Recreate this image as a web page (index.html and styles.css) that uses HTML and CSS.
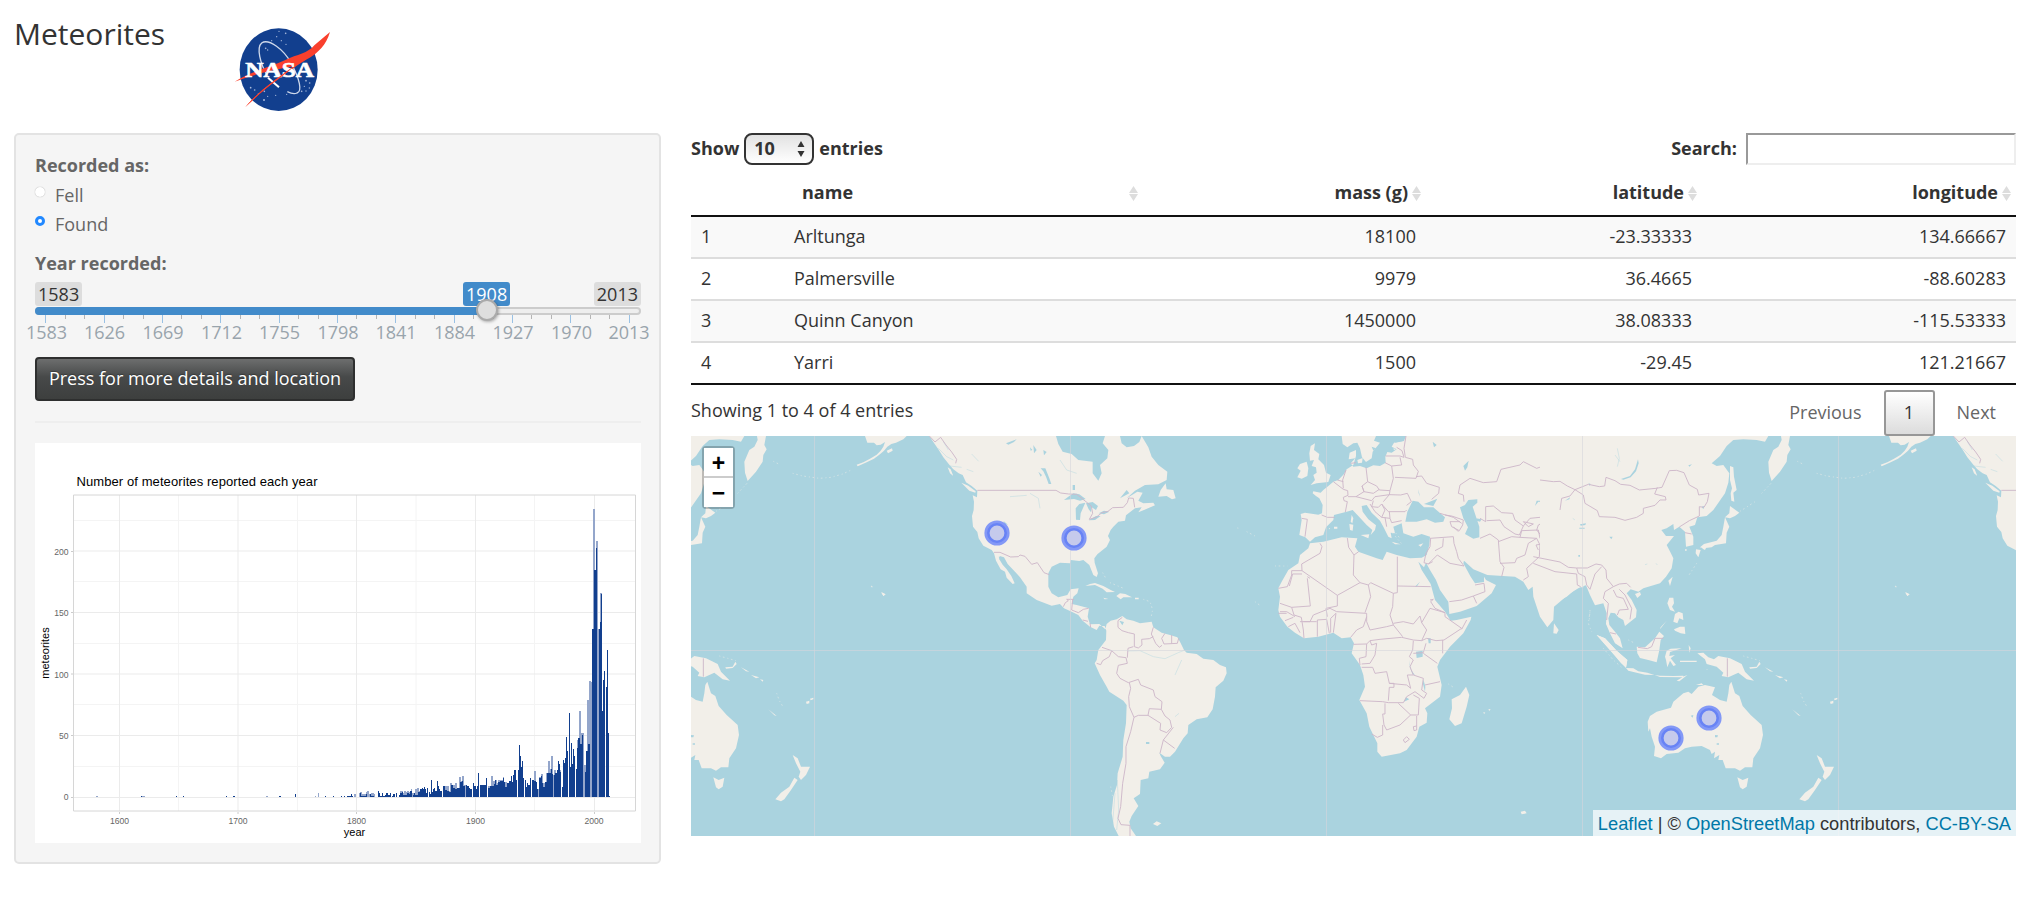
FILE: index.html
```html
<!DOCTYPE html>
<html lang="en">
<head>
<meta charset="utf-8">
<title>Meteorites</title>
<link rel="stylesheet" href="styles.css">
</head>
<body>
<header class="page-header">
  <h1 class="title">Meteorites</h1>
  <svg class="logo" viewBox="0 0 345 300" role="img" aria-label="NASA">
    <ellipse cx="164" cy="149" rx="117" ry="124" fill="#123f8e"/>
    <g fill="#a9badb"><circle cx="165" cy="34" r="2"/><circle cx="185" cy="40" r="2.5"/><circle cx="158" cy="50" r="2"/><circle cx="172" cy="62" r="2"/><circle cx="143" cy="62" r="2"/><circle cx="186" cy="73" r="2"/><circle cx="125" cy="85" r="2.5"/><circle cx="131" cy="90" r="2"/><circle cx="80" cy="203" r="2.5"/><circle cx="92" cy="210" r="2.5"/><circle cx="103" cy="222" r="2"/><circle cx="121" cy="214" r="2.5"/><circle cx="120" cy="240" r="3"/><circle cx="131" cy="229" r="2"/><circle cx="155" cy="226" r="2"/><circle cx="188" cy="223" r="2"/><circle cx="246" cy="182" r="2.5"/><circle cx="257" cy="189" r="2.5"/><circle cx="241" cy="199" r="2"/><circle cx="256" cy="204" r="2"/><circle cx="233" cy="214" r="2.5"/><circle cx="246" cy="213" r="2"/></g>
    <path d="M130 167C108 130 97 82 113 69C133 55 179 86 203 132C226 176 236 214 219 219C210 223 200 220 190 215" fill="none" stroke="#cdd7ea" stroke-width="4"/>
    <path d="M32 185C90 150 143 140 184 120C220 103 252 100 271 76L318 36C306 76 282 98 257 113C230 128 218 137 202 149C165 171 110 217 64 261C101 217 154 178 209 139C164 147 93 161 32 185Z" fill="#f9402d"/>
    <text x="64" y="172" textLength="206" lengthAdjust="spacingAndGlyphs" class="logo-word">NASA</text>
    <path d="M132 173L165 202" stroke="#fff" stroke-width="6"/>
    <path d="M64 261C101 217 154 178 209 139C187 165 120 203 64 261Z" fill="#f9402d"/>
  </svg>
</header>
<main class="layout">
  <aside class="well">
    <div class="group-label">Recorded as:</div>
    <label class="radio"><span class="dot"></span>Fell</label>
    <label class="radio"><span class="dot dot-on"></span>Found</label>
    <div class="group-label year-label">Year recorded:</div>
    <div class="slider">
      <div class="bubbles"><span class="bubble">1583</span><span class="bubble">2013</span><span class="bubble bubble-current">1908</span></div>
      <div class="track"><div class="fill"></div><div class="handle"></div></div>
      <svg class="scale" viewBox="0 0 646 40">
        <path class="tick-major" d="M31.500 0V8M90.500 0V8M148.500 0V8M206.500 0V8M265.500 0V8M323.500 0V8M381.500 0V8M440.500 0V8M498.500 0V8M556.500 0V8M615.500 0V8"/>
        <path class="tick-minor" d="M51.500 0V4M70.500 0V4M109.500 0V4M129.500 0V4M167.500 0V4M187.500 0V4M226.500 0V4M245.500 0V4M284.500 0V4M304.500 0V4M342.500 0V4M362.500 0V4M401.500 0V4M420.500 0V4M459.500 0V4M479.500 0V4M517.500 0V4M537.500 0V4M576.500 0V4M595.500 0V4"/>
        <g class="tick-text"><text x="32.500" y="24">1583</text><text x="90.500" y="24">1626</text><text x="149" y="24">1669</text><text x="207.500" y="24">1712</text><text x="265.500" y="24">1755</text><text x="324" y="24">1798</text><text x="382" y="24">1841</text><text x="440.500" y="24">1884</text><text x="499" y="24">1927</text><text x="557.500" y="24">1970</text><text x="615" y="24">2013</text></g>
      </svg>
    </div>
    <button class="details">Press for more details and location</button>
    <hr class="rule">
    <svg class="chart" viewBox="35 443 606 400">
      <rect x="35" y="443" width="606" height="400" fill="#fff"/>
      <path class="grid-minor" d="M73.500 520.500H635.500M73.500 581.500H635.500M73.500 643.500H635.500M73.500 704.500H635.500M73.500 766.500H635.500M178.500 495V811M297.500 495V811M416 495V811M534.500 495V811"/>
      <path class="grid-major" d="M73.500 551H635.500M73.500 612.500H635.500M73.500 674H635.500M73.500 735.500H635.500M73.500 797.500H635.500M119.500 495V811M238 495V811M356.500 495V811M475.500 495V811M594.500 495V811"/>
      <g transform="translate(340 690) scale(.33333)">
        <path class="bar-light" d="M-732 320V317H-725V320ZM-597 320V317H-586V320ZM-221 320V317H-216V320ZM-75 320V317H-71V320ZM-66 320V310H-62V320ZM42 321V313H48V321ZM58 321V310H61V306H65V312H77V306H82V303H87V311H92V309H101V312H104V321ZM180 321V304H189V308H192V303H197V306H202V303H207V307H212V298H217V309H226V297H231V295H237V303H241V298H246V321ZM309 321V288H327V303H331V280H336V285H345V280H350V293H357V261H362V273H366V258H372V284H378V321ZM444 321V288H453V258H458V274H465V269H470V280H475V270H489V262H493V277H500V283H510V321ZM582 321V243H588V277H592V298H598V262H602V252H608V280H619V248H624V213H630V238H633V198H639V256H642V240H649V250H654V240H663V321ZM711 321V150H717V63H723V130H732V225H738V182H742V30H748V-27H754V-25H757V321ZM759 321V-544H765V-356H769V-448H774V-183H780V-292H786V321Z"/>
        <path class="bar-dark" d="M-597 321V317H-594V321ZM-493 321V317H-490V321ZM-470 321V317H-467V321ZM-343 321V317H-340V321ZM-320 321V317H-316V321ZM-184 321V317H-178V321ZM-135 321V312H-131V321ZM-46 321V317H-41V321ZM-22 321V317H-17V321ZM3 321V317H6V321ZM12 321V317H15V321ZM22 321V318H32V313H36V318H39V321ZM60 321V310H64V318H77V312H80V321ZM90 321V313H94V317H103V321ZM114 321V303H117V310H121V317H126V310H129V318H135V314H139V310H143V315H149V310H153V321ZM157 321V317H160V312H164V321ZM168 321V310H172V321ZM177 321V316H180V309H187V305H190V314H201V308H207V311H210V302H215V308H217V321ZM218 321V316H222V308H226V316H233V305H239V297H244V296H247V294H249V298H251V292H255V298H258V308H261V295H264V321ZM267 321V306H270V312H273V270H276V306H279V297H282V293H286V303H291V272H294V288H297V298H300V303H305V321ZM309 321V288H315V300H321V303H327V306H332V284H339V293H345V298H351V293H360V277H366V272H369V288H375V321ZM378 321V284H381V288H387V293H391V297H395V321ZM399 321V280H402V288H408V297H410V288H414V250H417V321ZM420 321V286H438V265H441V321ZM445 321V293H450V287H462V282H465V270H468V284H475V276H480V272H489V264H492V277H495V292H501V280H508V272H513V258H516V276H519V256H522V240H528V269H531V321ZM534 321V240H537V166H540V199H543V232H546V214H549V264H552V321ZM555 321V270H558V292H561V278H564V284H570V264H573V321ZM576 321V270H582V274H588V276H591V298H594V321ZM597 321V264H602V258H607V280H610V290H616V276H622V250H627V248H633V237H636V252H639V321ZM642 321V256H646V250H651V240H654V214H657V221H660V246H663V321ZM666 321V292H669V210H672V220H675V203H678V141H681V184H684V321ZM687 321V70H690V232H693V160H696V221H699V178H702V197H705V321ZM708 321V237H711V174H714V144H720V163H726V134H729V321ZM735 321V246H738V182H744V163H750V321ZM756 321V-183H762V-360H768V-427H771V321ZM777 321V-183H779V-205H783V-289H786V63H789V-30H792V-57H795V321ZM798 321V-10H801V-120H804V129H807V318H810V321Z"/>
      </g>
      <path class="frame" d="M73.500 495H635.500V811H73.500Z"/>
      <path class="ticks" d="M71 551.500H73M71 612.500H73M71 674H73M71 735.500H73M71 797.500H73M119.500 812V814M238 812V814M356.500 812V814M475.500 812V814M594.500 812V814"/>
      <text x="76.500" y="486.400" textLength="241" class="chart-title">Number of meteorites reported each year</text>
      <g class="axis axis-y"><text x="68.500" y="554.500">200</text><text x="68.500" y="615.500">150</text><text x="68.500" y="677.500">100</text><text x="68.500" y="738.700">50</text><text x="68.500" y="800.300">0</text></g>
      <g class="axis axis-x"><text x="119.500" y="823.500">1600</text><text x="238" y="823.500">1700</text><text x="356.500" y="823.500">1800</text><text x="475.500" y="823.500">1900</text><text x="594" y="823.500">2000</text></g>
      <text x="354.500" y="835.500" class="axis-title">year</text>
      <text transform="translate(48.500 653) rotate(-90)" class="axis-title">meteorites</text>
    </svg>
  </aside>
  <section class="results">
    <div class="controls">
      <label class="length">Show <span class="select">10<svg viewBox="0 0 8 16"><path d="M4 0L7.500 6H.5ZM4 16L7.500 10H.5Z"/></svg></span> entries</label>
      <label class="search">Search:<input type="text" class="search-box"></label>
    </div>
    <table class="data">
      <colgroup><col class="c1"><col class="c2"><col class="c3"><col class="c4"><col class="c5"></colgroup>
      <thead><tr><th></th>
        <th class="name"><span>name</span><i class="sort"></i></th>
        <th class="num">mass (g)<i class="sort"></i></th>
        <th class="num">latitude<i class="sort"></i></th>
        <th class="num">longitude<i class="sort"></i></th></tr></thead>
      <tbody>
        <tr><td>1</td><td>Arltunga</td><td class="num">18100</td><td class="num">-23.33333</td><td class="num">134.66667</td></tr>
        <tr><td>2</td><td>Palmersville</td><td class="num">9979</td><td class="num">36.4665</td><td class="num">-88.60283</td></tr>
        <tr><td>3</td><td>Quinn Canyon</td><td class="num">1450000</td><td class="num">38.08333</td><td class="num">-115.53333</td></tr>
        <tr><td>4</td><td>Yarri</td><td class="num">1500</td><td class="num">-29.45</td><td class="num">121.21667</td></tr>
      </tbody>
    </table>
    <div class="footer">
      <div class="info">Showing 1 to 4 of 4 entries</div>
      <div class="pages"><a class="page">Previous</a><a class="page page-on">1</a><a class="page">Next</a></div>
    </div>
    <div class="map">
      <svg class="world" viewBox="0 0 1325 400">
        <defs>
          <g id="americas">
            <path class="land" d="M525 18L532 38L552 38L560 46L572 44L585 36L580 50L572 62L560 74L540 86L520 97L500 104L503 109L530 97L552 86L568 74L582 62L592 50L604 42L618 38L640 28L650 18ZM590 62L606 55L608 62L594 70ZM718 18L730 36L745 58L760 82L778 104L790 118L806 130L818 135L828 157L845 168L862 182L861 202L848 196L852 215L851 240L846 258L849 290L862 306L866 325L880 347L905 360L912 370L918 392L932 418L945 425L950 443L968 462L974 460L964 438L950 418L938 404L928 388L929 378L942 382L953 402L975 425L990 442L1010 470L1010 490L1040 510L1085 527L1110 522L1122 535L1145 545L1165 555L1178 572L1200 590L1220 600L1228 587L1244 588L1249 602L1248 630L1225 660L1220 690L1214 700L1230 735L1250 770L1258 785L1300 812L1310 825L1308 880L1300 930L1298 980L1283 1030L1281 1065L1270 1100L1265 1150L1272 1190L1286 1218H1338L1322 1195L1318 1175L1325 1158L1345 1128L1331 1105L1350 1092L1352 1050L1375 1045L1378 1025L1410 1018L1424 998L1412 978L1408 968L1425 980L1440 980L1455 965L1480 925L1493 910L1495 885L1520 868L1552 862L1568 838L1575 800L1577 772L1600 752L1610 730L1608 712L1590 705L1570 690L1540 686L1520 672L1490 668L1482 660L1470 635L1462 622L1440 615L1415 608L1390 592L1385 575L1350 580L1330 572L1310 568L1297 558L1280 568L1262 572L1250 582L1246 598L1228 582L1200 583L1193 560L1197 535L1160 525L1145 522L1150 500L1162 490L1166 475L1142 478L1132 495L1105 502L1085 490L1075 470V430L1085 410L1110 398L1140 400L1142 390L1168 393L1180 390L1198 405L1210 435L1220 441L1224 430L1214 398L1213 385L1222 373L1250 350L1260 330L1254 318L1262 300L1270 290L1285 275L1305 272L1308 256L1335 235L1355 232L1345 247L1362 240L1395 226L1390 218L1360 220L1345 212L1358 188L1342 185L1310 205L1335 182L1365 165L1405 163L1430 150L1432 125L1405 105L1385 80L1375 52L1355 18L1348 36L1332 48L1310 52L1295 40L1290 18H1245L1238 40L1255 60L1252 85L1230 105L1235 130L1225 152L1208 130V95L1165 90L1145 72L1118 65L1105 42L1098 18ZM773 112L782 118L790 138L780 130ZM814 158L835 167L857 184L856 188L838 182ZM1186 468L1200 462L1215 459L1240 468L1262 480L1275 486L1250 487L1238 476L1215 465ZM1279 498L1290 490L1306 492L1326 502L1300 502L1292 508ZM1335 503H1346V508H1335ZM1240 503L1255 507L1244 508ZM1427 160L1430 178L1450 180L1457 205L1446 208L1430 198L1405 200L1412 180ZM1389 1182L1400 1174L1414 1180L1402 1188ZM575 487L587 493L580 498ZM542 468L550 471L545 472Z"/>
            <path class="dots" d="M1238 428L1248 446M1260 458L1298 474M1360 508L1380 515L1388 540L1384 558M1262 1070L1268 1100"/>
            <path class="lake" d="M1122 210L1138 198L1150 190L1168 193L1187 207L1170 212L1152 207ZM1158 269L1157 235L1168 222L1186 218L1180 232L1172 250L1170 270ZM1188 220L1208 216L1224 228L1218 240L1205 232L1203 247L1196 238ZM1196 271L1218 258L1232 258L1215 270ZM1226 250L1242 242L1258 245L1242 253ZM1052 115L1060 124L1068 140L1076 162L1084 162L1078 145L1066 115ZM1045 125L1052 140L1056 135ZM948 40L980 28L972 36L955 44ZM1030 45L1040 60L1032 70ZM1060 60L1070 66L1062 76ZM940 272L954 284L945 283ZM926 380L935 384L930 390ZM1288 572L1302 576L1297 586ZM1368 936H1378V942H1368ZM1148 165H1155V180H1148ZM1020 52L1027 60L1022 62ZM1310 180L1318 190L1290 205Z"/>
            <path class="river" d="M745 55L770 80L790 90M760 35L775 60M780 108L815 112M845 72L866 94M830 118L850 125M1312 663L1350 662L1390 680L1425 686L1465 668L1485 660M1455 735L1475 690M1020 190L1045 205L1050 235M960 200L1010 196M1455 860L1467 850M1282 1050L1286 1140L1280 1200M1275 1090L1268 1180M1110 90L1130 120L1160 130"/>
            <path class="border" d="M718 18L735 36L752 22L768 45L785 66L800 88L797 100M862 181H1098L1112 189L1136 192L1160 193L1188 215L1204 228L1208 250L1198 268L1218 262L1236 248L1254 244L1268 233L1300 232L1312 218L1316 204L1330 205L1334 232M912 367L930 367L962 381L985 380L990 375L1005 379L1025 403L1042 398L1062 428L1078 434M1120 530L1126 518L1135 512L1130 508H1152M1148 508L1145 540M1145 540L1165 548L1180 538L1196 535M1178 570L1194 574M1200 580L1202 592M1297 562L1284 572L1284 592L1296 602L1315 608L1333 612V650L1345 654L1356 645L1355 628L1378 626L1390 620M1390 592L1384 612L1397 640L1408 652L1416 646M1425 610L1415 625L1422 642L1462 640L1466 625M1445 615V640M1236 652L1265 662L1285 680L1308 683L1312 700L1285 706L1280 730L1290 745L1315 758L1345 748L1352 765L1390 780L1395 800L1416 815L1414 838L1378 836L1374 856H1345L1332 862L1318 830L1316 800L1322 775L1318 758M1312 683L1314 655L1330 650M1265 662L1258 680L1238 692L1232 704L1220 700M1374 856L1412 880L1410 900L1430 908L1445 892L1440 870L1425 858L1414 838M1450 892L1420 930L1410 970M1420 930L1454 955M1332 862L1322 905L1308 950L1308 1000L1298 1060L1292 1130L1284 1165L1293 1184L1320 1186V1218"/>
          </g>
          <g id="asia">
            <path class="land" d="M-60 18H625L615 35L590 30L550 28L520 30L500 48L480 78L455 100L470 108L490 105L508 130L505 158L495 190L460 240L440 258L412 262L405 285L388 290L400 320V345L378 350L375 305L358 290L342 300L340 282L320 295L304 300L318 318L342 318L328 335L320 345L332 368L340 385L335 415L318 440L300 460L250 475L235 485L212 478L200 490L215 510L230 540L228 562L195 588L190 570L175 562L165 550L152 548L145 565L148 585L165 605L180 625L188 655L165 640L150 610L138 582L140 550L130 520L105 526L90 495L78 466L50 475L20 500L-60 540ZM690 18L685 45L692 58L682 75L680 95L660 125L635 153L627 128L625 95L640 60L655 50L665 30L663 18ZM510 108L520 112L522 140L530 180L520 188L523 215L514 212L512 190L516 175L510 150ZM510 228L538 248L525 258L510 265L495 262L508 250ZM495 262L508 290L500 308L498 340L465 345L455 352L430 355L420 352L432 342L470 332L485 315L490 290ZM408 358L422 360L415 382L407 370ZM425 355L440 350L435 360ZM375 358H380V362H375ZM325 452L338 440L330 468ZM225 492L240 486L243 494L232 504ZM328 503L340 503L342 520L336 530L345 545L330 540L322 520ZM345 552L356 545L368 550L370 570L358 565L352 580L340 575ZM342 598L360 590L374 590L376 612L362 610L345 602ZM300 598L320 572L302 592ZM110 615L135 625L170 662L202 690L198 713L182 698L155 665ZM198 714L220 715L235 724L262 728L283 735L255 734L205 722ZM284 735L300 737L340 738L370 737V742L300 741ZM350 752L372 739L382 735L358 754ZM230 650L255 652L285 625L298 605L312 618L302 630L298 660L290 697L265 690L240 684L232 670ZM320 662L332 656L365 655L330 666L328 678L345 675L332 685L348 705L340 708L330 692L322 712L318 690L315 680ZM386 645L392 655L388 668ZM360 692H410V696H360ZM412 670L430 668L445 682L462 688L475 678L510 685L545 702L555 725L582 752L560 748L535 728L505 742L485 738L490 728L470 710L440 702L435 688ZM568 712L590 710L598 695L602 702L590 714L570 716ZM265 905L263 875L270 858L290 845L333 833L340 815L370 790L385 785L395 792L415 770L435 765L465 772L456 795L480 810L500 815L505 790L508 765L514 755L525 790L538 798L548 828L572 855L605 885L609 915L600 955L580 985L577 1012L555 1012L540 1022L525 1015L497 1015L488 990L475 990L478 975L462 985L465 965L455 972L450 960L425 948L395 950L375 955L355 968L320 972L303 985L282 978L285 950L275 920L270 895ZM408 765L425 760L430 765ZM532 1042L548 1050L565 1043L560 1070L548 1078L540 1072ZM770 975L785 985L795 1010L822 1010L810 1035L795 1050L788 1040L793 1025L780 1000ZM775 1043L785 1050L765 1080L745 1108L735 1114L718 1108L735 1088L760 1070ZM697 838L722 858L715 856ZM810 815L820 812L820 820L812 822ZM822 806L832 803V808L824 811ZM615 712L640 725L630 724ZM645 735L670 742L660 745ZM672 748L682 750L680 755ZM1035 487L1048 493L1042 498Z"/>
            <path class="dots" d="M540 244L565 228L590 212M605 190L635 158M712 94L732 104M770 130L800 138L850 145L885 142L920 132L950 118M722 790L730 812L742 832M410 400L385 438M90 545L85 580L95 605M130 655L160 690L185 712M205 630L225 640M1005 468L1015 472M550 678L600 692M440 720L446 712"/>
            <path class="lake" d="M183 147L210 138L225 118L234 88L236 100L228 124L212 142L190 149ZM148 320H158L154 328ZM60 283L78 280L76 285L62 287ZM58 293H74V296H58ZM55 375H60V380H55ZM465 915L474 916L472 922H465ZM392 857L400 855L398 863ZM470 940H477V944H470ZM425 230L433 228L430 238ZM15 212L30 202L28 208ZM385 106L396 103L388 110ZM86 160L92 162L88 168Z"/>
            <path class="river" d="M165 75L180 95M172 55L178 85L172 110M500 60L470 95M38 265L45 270M255 404L262 402M288 400L292 405"/>
            <path class="border" d="M-60 150L-20 155L0 154L22 168L45 179L85 163L118 170L134 168L138 142L165 152L182 163L210 166L238 180L288 175L306 172L328 122L350 121L372 128L388 165L412 178L416 195L447 190L442 215L432 232L418 230V258L388 272L358 291M45 179L70 195L75 220L112 242L118 260L165 262L195 271L230 262L250 250V235L285 226L300 210L318 210L316 200L284 192L292 172M45 179L30 198L5 205L0 240M-80 400L-15 425L50 432M-80 380L0 396L25 412L50 414L82 414L108 402L125 405L138 420L140 445L160 470M50 432L52 465L62 470M50 414L55 430L75 440L80 465L90 478L105 432L125 410M160 470L135 485L130 505L145 520L140 570M160 470L178 462L200 460L212 472M160 480L170 500L190 505L205 538L178 540L172 555M178 478L195 495L215 535L210 568M375 308L395 312M150 608L168 612M234 652L262 656L275 650L285 625H310M502 685V740"/>
          </g>
        </defs>
        <rect width="1325" height="400" fill="#aad3df"/>
        <g transform="translate(509 -6) scale(.33333)">
          <path class="land" d="M1150 18H618L612 32L582 38L575 50L590 58L575 68L562 66L556 80L557 98L540 108L520 106L500 115L480 108L460 110L452 100L466 85L446 88L449 68L468 60L468 78L460 105L440 118L432 132L415 150L400 155L385 168L370 180L362 188L340 184L338 190L348 198L358 205L368 225L366 250L355 254L315 248L302 252L305 270L298 315L316 322L330 335L345 322L370 315L378 292L400 270L402 255L440 245L458 240L475 258L500 285L517 300L512 315L525 300L528 286L505 268L488 245L485 228L500 225L515 248L540 272L550 290L565 320L575 325L572 308L585 310L580 290L605 280L610 310L640 320L665 312L690 320L688 345L680 375L665 383L630 385L590 375L560 365L548 390L530 385L475 365L465 350L472 325L425 322L370 335L330 340L325 355L300 375L295 400L265 420L245 455L235 475L240 500L235 540L240 560L262 590L285 608L312 625L355 620L400 608L425 625L452 622L462 640L455 670L480 705L490 735L495 770L478 810L500 850L508 890L532 940L532 965L545 980L600 970L620 960L650 920L658 890L680 878L682 850L675 835L720 800L725 765L712 710L720 690L750 650L790 610L812 570L814 560L770 570L752 572L735 545L705 510L692 462L665 420L655 395L672 412L678 398L690 420L708 450L720 480L745 515L748 552L780 545L830 528L875 490L888 465L858 450L852 440L852 456L825 460L812 440L790 400L792 392L820 418L862 435L945 440L970 455L985 480L998 470L1000 500L1020 560L1042 592L1060 570L1062 530L1110 490L1140 472H1150ZM425 18L428 42L442 52L460 40L472 38L480 55L486 82L498 96L515 85L518 65L540 38L522 32L528 18ZM472 90L488 84L486 98L474 100ZM345 40L332 48L328 70L330 92L342 90L335 108L348 112L350 128L340 135L345 150L332 165L350 160L385 156L392 135L378 128L372 105L355 88L358 72L342 60ZM320 95L300 102L292 115L302 122L292 142L305 146L322 138L325 115ZM455 255L460 265L457 280L452 275ZM448 282L460 284L458 302L450 300ZM482 315L508 313L505 325ZM575 335L602 343L585 343ZM655 345L670 340L662 350ZM580 55L588 58L582 60ZM1062 580L1076 600L1070 611L1060 610ZM798 770L808 795L800 830L785 880L765 888L748 868L756 835L755 808L780 795ZM1190 615L1215 625L1250 662L1282 690L1278 713L1240 672ZM962 1145L975 1142L980 1150L965 1153ZM865 838L872 837L868 843ZM850 846L856 848L852 852ZM402 290H412V296H402ZM386 296L390 294V298Z"/>
          <path class="lake" d="M616 275L622 245L638 212L655 215L672 232L700 232L735 262L730 275L705 278L680 268L650 275ZM672 222L712 206L700 228ZM780 232L795 225L805 210L832 208V218L818 230L828 260L838 290L838 322L820 326L795 312L804 292L790 265ZM828 265L845 268L840 275L830 272ZM648 665L668 662V680L650 684ZM628 690L632 718L645 736L638 732L630 715ZM670 748L676 770L675 785L669 762ZM1005 228L1010 212H1055L1048 217L1015 215ZM790 108L806 92L802 112L795 122ZM698 35L710 45L702 52ZM655 178L660 200L670 210L660 200L656 190ZM618 802L628 808L612 815ZM692 625V640H686L684 625ZM1245 90L1258 80L1255 120L1246 110ZM515 50L528 55L520 62ZM1030 262H1045V266H1030ZM1165 158L1175 160L1168 172ZM660 455L650 470H645ZM585 38L612 33L612 30L590 28Z"/>
          <path class="dots" d="M112 294L122 296M140 305L165 318M225 408L262 408M165 515L185 530M1170 540L1168 570M572 290L600 325M578 310L604 340M745 762L765 775"/>
          <path class="border" d="M305 265L322 268L315 320M365 255L382 262L404 262M400 155L430 178L443 182L444 196L430 202L432 212L442 215L436 246M430 175L428 150L438 120M412 150L430 155M452 100L468 98M498 112L503 155L486 168L492 185L468 200L444 200M503 155L530 168L538 180L570 182L580 145L575 108M557 78H600L612 82L606 62L590 52M618 18L612 55L616 82M600 82L605 105L575 108L555 98M616 82L638 88L640 105L655 124L648 145L585 142M648 140L665 138L680 160L718 172L716 190L695 208M570 182L568 194L602 195L622 190L634 215L620 226M486 168L492 185L520 190L538 178M468 200L515 212L525 200L568 194M520 212L515 230L535 232L545 222L565 245H615L620 240M510 222L525 245L545 262L555 240L545 222M568 194L550 215M555 262L560 290M545 262L570 265L575 278L605 272M568 245L570 265M442 324L446 352L462 375L460 435L480 458L412 496L306 422L305 402L360 370L366 350L360 340M306 422H275V435L262 470L235 475M306 432H278L268 468M322 445L331 528L275 532L240 520M322 440L330 445M462 375L476 365M480 458L505 465L512 458L580 490L592 488V380M592 468L692 470M580 490L578 530L570 555L580 585L560 590L510 600L500 575V550L410 545L390 535L340 555L330 575L300 575M505 465L512 500L495 548M412 496V528L378 535L382 560M275 532L282 555L304 562L310 600L312 625M240 545H260L285 560M235 550H260M255 572L280 562M265 590L285 580L300 608M352 620V570L380 568L388 610M392 608V565L408 550L400 608M310 575H350M452 622L470 600L490 590L500 560M460 643L500 642L510 632L540 628L605 622L640 630L665 632L680 625L708 632L732 630L785 595L735 560V548L705 535L692 515L700 508L690 510M580 580L610 575L640 582L660 558L665 578L680 600L665 632M580 585L608 620M665 578L690 535L735 548M785 598L800 570M500 642L498 680L478 685L480 705M510 632L515 645L530 640L525 675L510 700L485 702M485 712H518L525 730L560 725L568 760L620 765L632 775L622 735H640L670 745L665 780L680 790L672 805L645 785L620 800L610 818H565L548 815L480 812M568 760H582V772H568L565 812M728 670V630M670 670L712 700M640 632L638 660L628 680L640 690L630 710L640 735M640 670L670 668L678 640M675 765L720 755M555 820V852H548L552 885L560 900L600 885L632 855L655 855L658 805L640 795M595 820L632 855M650 858V900L642 902L640 890L650 888M548 885V915L532 922L515 912M610 930L620 920L628 928L615 938ZM690 325L760 320L762 340L770 365L775 385L792 408L750 400L712 375L685 402L672 398L678 370L690 350L692 325M705 362L728 350L730 325M685 402L698 395M748 515L785 510L820 498L855 485L852 460L825 465M820 498L830 520M735 255L755 258L790 270L788 285L778 302L755 290L750 275L780 275M720 250L760 262L785 280M760 290L775 305M792 215L790 195L775 190L780 165L810 145L850 158L890 155L903 118L960 105L970 95L1010 115L1030 108L1062 155L1098 158L1125 178L1160 162L1190 168M1125 178L1110 190L1085 215L1060 240L1062 262L1015 285L1010 300L1050 350L1048 375L1080 380M840 265L857 275V230L880 228L905 248L938 250L945 270L970 288L990 265L1060 258M970 288L958 315L945 312L912 290L900 270L860 272M840 325L870 312L895 330L900 395L912 412L905 440M895 335L935 320L960 322L1010 325L985 340L975 375L950 385L945 398L900 400M960 322L965 302L1015 300L1020 325L1040 340M1010 325L1020 345L1018 380L980 415L985 440L970 450M1040 340L1008 345L1015 360M1080 380L1062 395L1070 405L1130 430M970 275L1000 282L985 290Z"/>
        </g>
        <use href="#asia" transform="translate(869 -6) scale(.33333)"/>
        <use href="#asia" transform="translate(-155 -6) scale(.33333)"/>
        <use href="#americas" transform="translate(-1 -6) scale(.33333)"/>
        <use href="#americas" transform="translate(1023 -6) scale(.33333)"/>
        <path class="graticule" d="M0 214.500H1325M123.500 0V400M379.500 0V400M635.500 0V400M891.500 0V400M1147.500 0V400"/>
        <g class="pins">
          <g transform="translate(306 97)"><circle r="10"/><circle r="8.700"/></g>
          <g transform="translate(383 102)"><circle r="10"/><circle r="8.700"/></g>
          <g transform="translate(980 302)"><circle r="10"/><circle r="8.700"/></g>
          <g transform="translate(1018 282)"><circle r="10"/><circle r="8.700"/></g>
        </g>
      </svg>
      <div class="zoom"><span>+</span><span>−</span></div>
      <div class="credit"><a>Leaflet</a> | © <a>OpenStreetMap</a> contributors, <a>CC-BY-SA</a></div>
    </div>
  </section>
</main>
</body>
</html>
```
FILE: styles.css
```css
* { box-sizing: border-box; }
body { margin: 0; background: #fff; color: #333; font: 18px/24px "Open Sans", sans-serif; }
.page-header { display: flex; height: 133px; padding-left: 14px; }
.title { width: 210px; margin: 14px 0 0; font-size: 30px; font-weight: 400; line-height: 40px; }
.logo { width: 115px; height: 100px; margin-top: 20px; }
.logo-word { font: bold 64px "Liberation Serif", serif; fill: #fff; stroke: #fff; stroke-width: 2; }
.layout { display: flex; gap: 30px; padding-left: 14px; align-items: flex-start; }

.well { width: 647px; height: 731px; padding: 18px 18px 0 19px; background: #f5f5f5; border: 2px solid #e3e3e3; border-radius: 5px; color: #666; }
.group-label { font-weight: 700; line-height: 24px; }
.group-label:first-child { margin-bottom: 3px; }
.radio { display: flex; align-items: center; height: 29px; line-height: 24px; }
.dot { width: 10px; height: 10px; margin: -5px 10px 0 0; border-radius: 50%; background: #fff; box-shadow: 0 0 1px #999; }
.dot-on { border: 3px solid #2188ff; box-shadow: none; }
.year-label { margin-top: 13px; }
.slider { position: relative; height: 74px; margin-top: 7px; }
.bubbles { display: flex; justify-content: space-between; }
.bubble { height: 24px; padding: 0 3px; border-radius: 3px; background: #ddd; color: #333; line-height: 25px; }
.bubble-current { position: absolute; left: 428px; top: 0; background: #428bca; color: #fff; }
.track { position: relative; height: 8px; margin-top: 1px; border: 2px solid #ccc; border-radius: 5px; background: #eee; }
.fill { width: 450px; height: 8px; margin: -2px 0 0 -2px; border-radius: 5px 0 0 5px; background: #428bca; }
.handle { position: absolute; left: 439px; top: -10px; width: 22px; height: 22px; border: 2px solid #aaa; border-radius: 50%; background: #dedede; box-shadow: 1px 1px 3px rgba(0,0,0,.3); }
.scale { display: block; width: 646px; height: 40px; margin-left: -21px; }
.tick-major { stroke: #99c1e4; }
.tick-minor { stroke: #b5b5b5; }
.tick-text { fill: #99a4ac; text-anchor: middle; }
.details { display: block; width: 320px; height: 44px; margin-top: 1px; padding: 0 0 2px; border: 2px solid #2e2f2f; border-radius: 4px; background: linear-gradient(#6d6e6e, #474949 45%, #3d3f3e); color: #fff; font: 500 18px "Open Sans", sans-serif; text-shadow: 0 -1px 1px rgba(0,0,0,.3); }
.rule { height: 2px; margin: 20px 0; border: 0; background: #eee; }
.chart { display: block; width: 606px; height: 400px; }
.grid-major, .grid-minor { fill: none; stroke: #ebebeb; stroke-width: 1; }
.grid-minor { stroke: #f4f4f4; }
.frame { fill: none; stroke: #d6d6d6; }
.ticks { stroke: #ccc; }
.bar-light { fill: #94a6cb; shape-rendering: crispEdges; }
.bar-dark { fill: #123f8e; shape-rendering: crispEdges; }
.chart text { font-family: "Liberation Sans", sans-serif; }
.chart-title { font-size: 13px; fill: #000; }
.axis { font-size: 8.600px; fill: #666; }
.axis-y { text-anchor: end; }
.axis-x, .axis-title { text-anchor: middle; }
.axis-title { font-size: 11px; fill: #000; }

.results { width: 1325px; }
.controls { display: flex; justify-content: space-between; height: 32px; font-weight: 700; line-height: 31px; }
.length { display: flex; gap: 5px; }
.select { display: flex; align-items: center; justify-content: space-between; width: 70px; height: 32px; padding: 0 7px 2px 8px; border: 2px solid #333; border-radius: 8px; background: linear-gradient(#e2e2e2, #fff); }
.select svg { width: 8px; height: 16px; margin-top: 2px; fill: #333; }
.search { display: flex; gap: 9px; }
.search-box { width: 270px; height: 32px; border: 2px solid; border-color: #999 #eee #eee #999; background: #fff; }
.data { width: 1325px; table-layout: fixed; border-collapse: separate; border-spacing: 0; border-bottom: 2px solid #111; }
.c1 { width: 93px; } .c2 { width: 360px; } .c3 { width: 282px; } .c4 { width: 276px; } .c5 { width: 314px; }
th { height: 52px; padding: 15px 5px 0 18px; border-bottom: 2px solid #111; line-height: 24px; text-align: left; vertical-align: top; }
.data .num { text-align: right; }
.name span { display: inline-block; width: 323px; }
.sort { display: inline-block; width: 9px; height: 15px; margin-left: 4px; vertical-align: -2px; background: #ddd; clip-path: polygon(50% 0, 100% 46%, 0 46%, 0 54%, 100% 54%, 50% 100%, 0 54%, 0 46%); }
td { height: 42px; padding: 0 10px 2px; line-height: 38px; border-bottom: 2px solid #ddd; }
tr:last-child td { height: 40px; border-bottom: 0; }
tbody tr:nth-child(odd) { background: #f9f9f9; }
.footer { display: flex; justify-content: space-between; height: 51px; }
.info { padding-top: 13px; }
.pages { display: flex; height: 46px; margin-top: 5px; color: #666; line-height: 44px; }
.page { padding: 0 22px; }
.page:last-child { padding-right: 20px; }
.page-on { width: 51px; padding: 0; border: 2px solid #979797; border-radius: 3px; background: linear-gradient(#fff, #dcdcdc); color: #333; text-align: center; line-height: 41px; }

.map { position: relative; height: 400px; overflow: hidden; }
.world { display: block; width: 1325px; height: 400px; }
.land { fill: #f2efe9; }
.lake { fill: #aad3df; }
.river { fill: none; stroke: #aad3df; stroke-width: 2; opacity: .6; }
.dots { fill: none; stroke: #f2efe9; stroke-width: 2.500; stroke-dasharray: 3 8 5 9; opacity: .6; }
.border { fill: none; stroke: #cdb7c9; stroke-width: 2.800; stroke-linejoin: round; }
.graticule { stroke: #d5d5dc; stroke-opacity: .6; }
.pins circle { fill: none; stroke: #8398f6; stroke-width: 5.200; }
.pins circle + circle { fill: #c5caec; stroke: #6883f5; stroke-width: 2.600; }
.zoom { position: absolute; left: 11px; top: 10px; width: 33px; height: 63px; border: 2px solid rgba(0,0,0,.22); border-radius: 4px; background-clip: padding-box; color: #000; font: bold 23px/30px "Liberation Sans", sans-serif; text-align: center; }
.zoom span { display: block; height: 29px; background: #fff; }
.zoom span:first-child { height: 30px; border-bottom: 2px solid #ccc; }
.credit { position: absolute; right: 0; bottom: 0; height: 26px; padding: 0 5px; background: rgba(255,255,255,.7); color: #333; font: 18.250px/28px "Liberation Sans", sans-serif; white-space: nowrap; }
.credit a { color: #0078a8; }
```
